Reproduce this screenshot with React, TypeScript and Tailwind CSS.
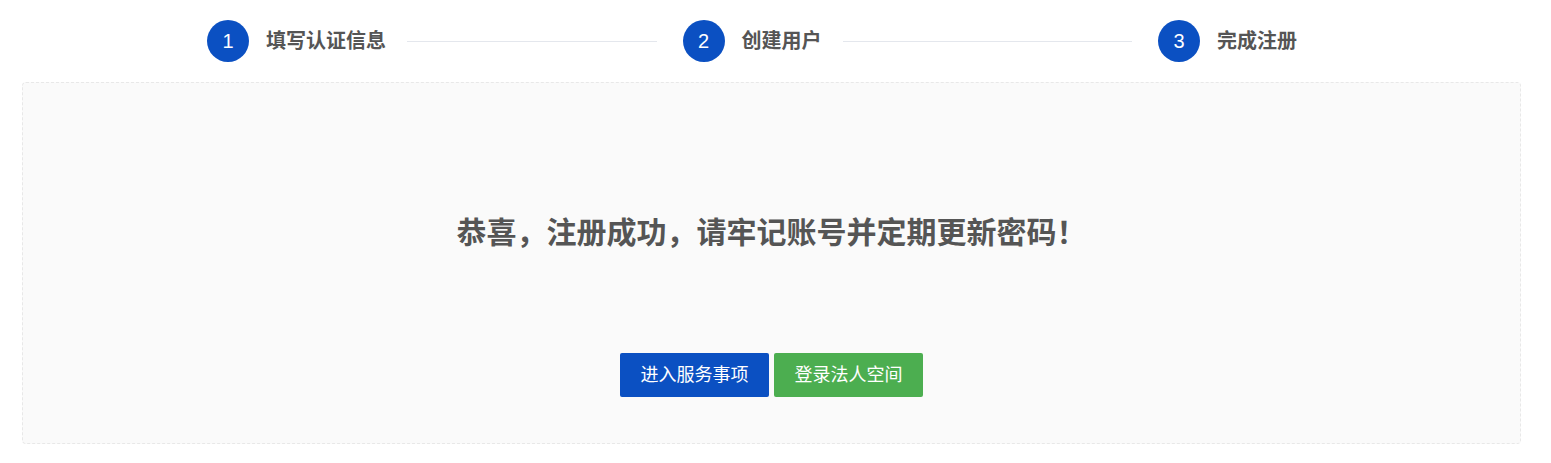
const font = { fontFamily: '"Liberation Sans", "Noto Sans CJK SC", sans-serif' };

const steps = ["填写认证信息", "创建用户", "完成注册"];

const App = () => {
  return (
    <div className="w-[1551px] h-[463px] bg-white" style={font}>
      <div className="flex pl-[207px] pt-[20px] h-[62px]">
        {steps.map((title, i) => {
          const last = i === steps.length - 1;
          return (
            <div key={title} className={`flex items-center ${last ? "" : "w-[475.5px]"}`}>
              <div className="w-[42px] h-[42px] rounded-full bg-[#0b50c2] text-white text-[20px] flex items-center justify-center shrink-0">
                {i + 1}
              </div>
              <span className="ml-[17px] text-[20px] font-bold text-[#555] whitespace-nowrap">{title}</span>
              {!last && <div className="flex-1 h-px bg-[#e4e7ed] ml-[21px] mr-[26px]" />}
            </div>
          );
        })}
      </div>
      <div className="mt-[20px] mx-[22px] w-[1499px] h-[362px] border border-dashed border-[#e8e8e8] rounded bg-[#fafafa] flex flex-col items-center">
        <h2 className="mt-[128px] text-[30px] font-bold text-[#555] leading-[44px]">
          恭喜，注册成功，请牢记账号并定期更新密码！
        </h2>
        <div className="mt-[98px] flex gap-[5px]">
          <button className="w-[149px] h-[44px] bg-[#0b50c2] text-white text-[18px] rounded-[2px]">
            进入服务事项
          </button>
          <button className="w-[149px] h-[44px] bg-[#4cae50] text-white text-[18px] rounded-[2px]">
            登录法人空间
          </button>
        </div>
      </div>
    </div>
  );
};

export default App;
